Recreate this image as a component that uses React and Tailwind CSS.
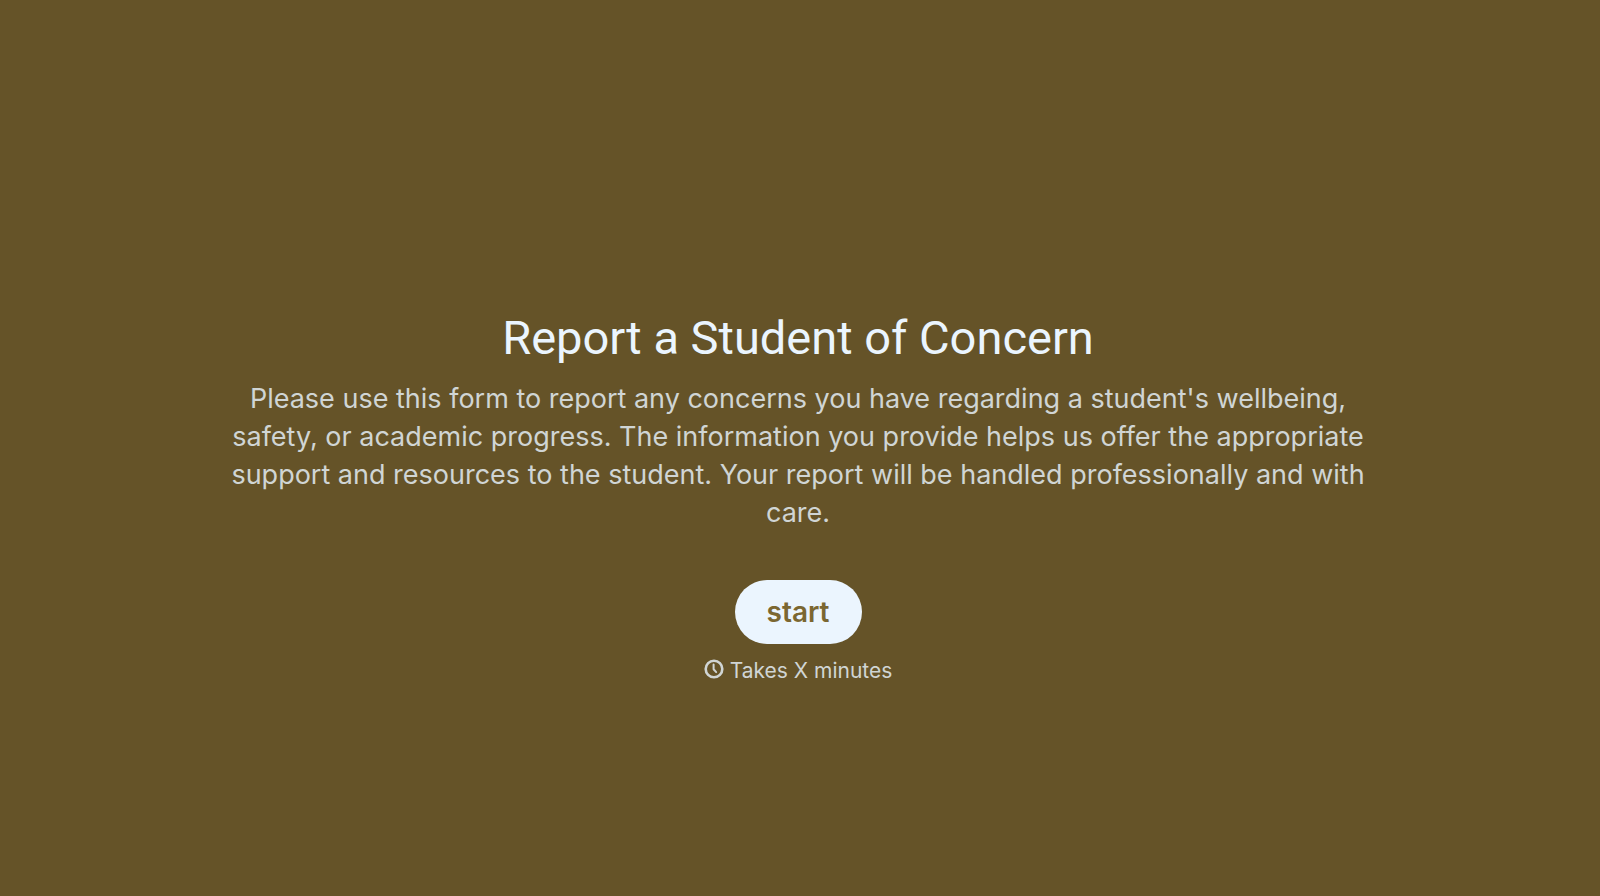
import React from 'react';

const ClockIcon = () => (
  <svg
    viewBox="0 0 20 20"
    className="w-5 h-5 mb-1 shrink-0"
    fill="none"
    stroke="currentColor"
    strokeLinecap="round"
    strokeLinejoin="round"
    aria-hidden="true"
  >
    <circle cx="10" cy="10" r="8.3" strokeWidth="2.6" />
    <path d="M9.6 5.6v4.7l2.6 2.8" strokeWidth="2" />
  </svg>
);

const App = () => {
  return (
    <main className="min-h-screen bg-[#655328] font-['Inter',sans-serif] flex flex-col items-center justify-center pl-4 pr-5 pt-[102px]">
      {/* Intro */}
      <div className="w-full max-w-[1150px] text-center">
        <h1 className="font-['Roboto',sans-serif] text-[47px] leading-[52px] text-[#ebf5fe]">
          Report a Student of Concern
        </h1>
        <p className="mt-4 text-[27px] leading-[38px] text-[#d0d5d4]">
          Please use this form to report any concerns you have regarding a student's wellbeing, safety, or academic
          progress. The information you provide helps us offer the appropriate support and resources to the student.
          Your report will be handled professionally and with care.
        </p>
      </div>

      {/* Start */}
      <button
        type="button"
        className="mt-12 h-16 px-8 rounded-full bg-[#ebf5fe] text-[28px] font-semibold text-[#7b6731] cursor-pointer"
      >
        start
      </button>
      <div className="mt-3 flex items-center gap-1.5 text-[21px] leading-[30px] text-[#d0d5d4]">
        <ClockIcon />
        <span>Takes X minutes</span>
      </div>
    </main>
  );
};

export default App;
